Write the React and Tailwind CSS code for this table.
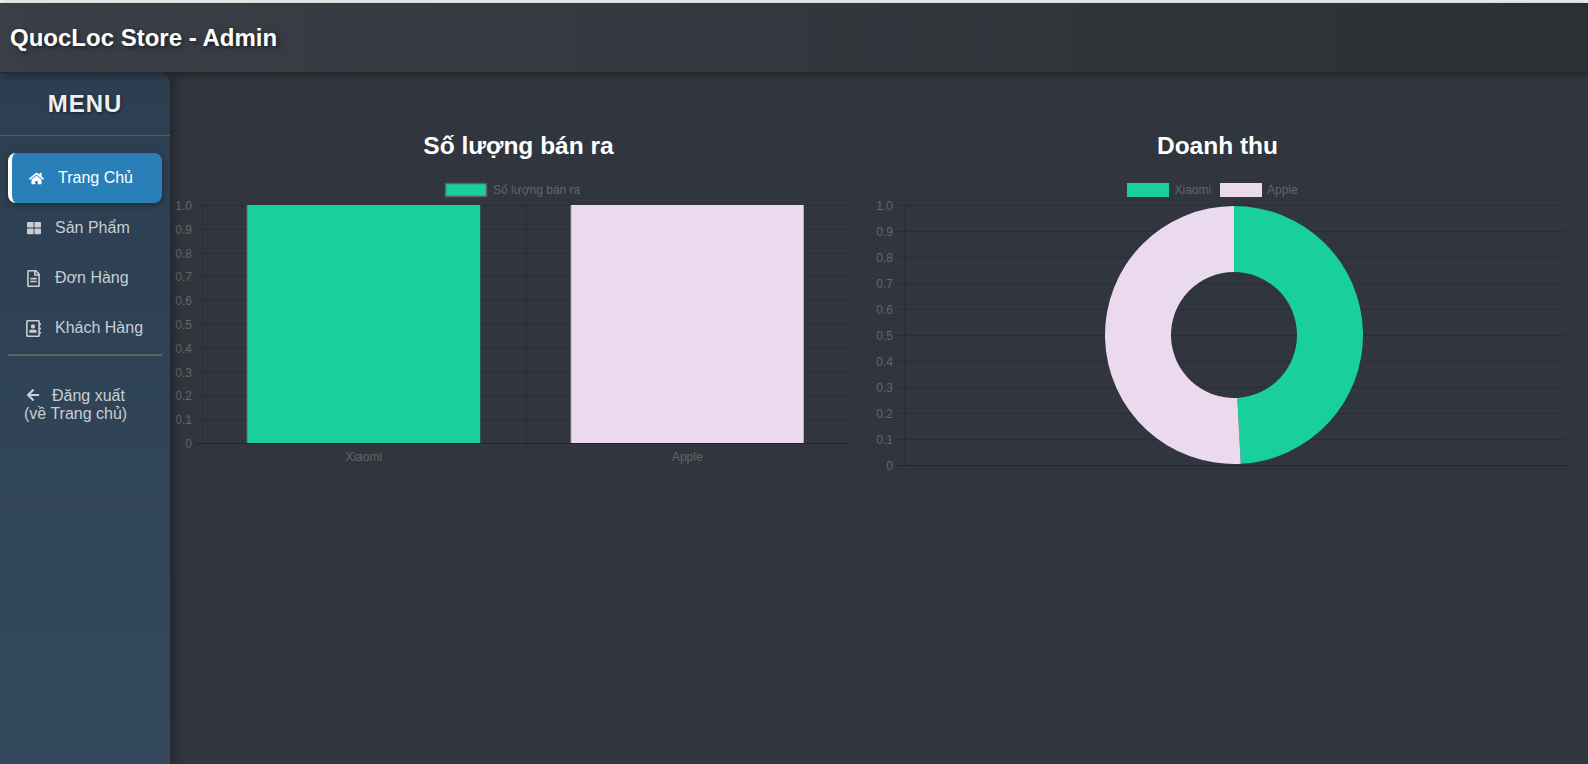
import React from 'react';
import { FaHome, FaThLarge, FaRegFileAlt, FaRegAddressBook, FaArrowLeft } from 'react-icons/fa';

const GREEN = '#19cf9c';
const PINK = '#ebd9ef';
const GRID = '#2a2d33';
const ZERO = '#222529';
const TICK = '#666666';
const FONT = "'Liberation Sans', Arial, sans-serif";

const menu = [
  { label: 'Trang Chủ', icon: FaHome, size: 15, active: true },
  { label: 'Sản Phẩm', icon: FaThLarge, size: 14 },
  { label: 'Đơn Hàng', icon: FaRegFileAlt, size: 17 },
  { label: 'Khách Hàng', icon: FaRegAddressBook, size: 17 },
];

const yTicks = ['1.0', '0.9', '0.8', '0.7', '0.6', '0.5', '0.4', '0.3', '0.2', '0.1', '0'];

const px = (v) => Math.round(v) + 0.5;

// angles in degrees, clockwise from 12 o'clock
const arcPath = (cx, cy, r0, r1, a0, a1) => {
  const pt = (r, a) => {
    const rad = (a * Math.PI) / 180;
    return [cx + r * Math.sin(rad), cy - r * Math.cos(rad)];
  };
  const large = a1 - a0 > 180 ? 1 : 0;
  const [x1, y1] = pt(r1, a0);
  const [x2, y2] = pt(r1, a1);
  const [x3, y3] = pt(r0, a1);
  const [x4, y4] = pt(r0, a0);
  return `M${x1} ${y1} A${r1} ${r1} 0 ${large} 1 ${x2} ${y2} L${x3} ${y3} A${r0} ${r0} 0 ${large} 0 ${x4} ${y4} Z`;
};

const BarChart = () => {
  const left = 32;
  const right = 679;
  const top = 35;
  const step = 23.8;
  const bottom = top + step * 10;
  const cat = (right - left) / 2;
  const barW = cat * 0.72;
  const bars = [
    { label: 'Xiaomi', color: GREEN },
    { label: 'Apple', color: PINK },
  ];

  return (
    <svg width="697" height="310" className="block" fontFamily={FONT}>
      {/* legend */}
      <rect x="275.5" y="13.5" width="41" height="13" fill={GREEN} stroke="#5c5f63" strokeWidth="1.5" />
      <text x="323" y="24" fontSize="12" fill={TICK}>Số lượng bán ra</text>

      {/* grid */}
      {yTicks.map((t, i) => {
        const y = px(top + i * step);
        return (
          <g key={t}>
            <line x1="25" x2={right} y1={y} y2={y} stroke={i === 10 ? ZERO : GRID} strokeWidth="1" />
            <text x="22" y={y + 4} fontSize="12" fill={TICK} textAnchor="end">{t}</text>
          </g>
        );
      })}
      <line x1={px(left)} x2={px(left)} y1={top} y2={bottom + 8} stroke={GRID} />
      <line x1={px(left + cat)} x2={px(left + cat)} y1={top} y2={bottom + 8} stroke={GRID} />

      {/* bars */}
      {bars.map((b, i) => {
        const cx = left + cat * i + cat / 2;
        return (
          <g key={b.label}>
            <rect x={cx - barW / 2} y={top} width={barW} height={bottom - top} fill={b.color} />
            <line x1={px(cx - barW / 2) - 0.5} x2={px(cx - barW / 2) - 0.5} y1={top} y2={bottom} stroke="#8a8d92" strokeOpacity="0.6" />
            <text x={cx} y={bottom + 18} fontSize="12" fill={TICK} textAnchor="middle">{b.label}</text>
          </g>
        );
      })}
      <line x1={left} x2={right} y1={px(bottom)} y2={px(bottom)} stroke={ZERO} />
    </svg>
  );
};

const DoughnutChart = () => {
  const left = 35;
  const right = 697;
  const top = 35;
  const step = 26;
  const bottom = top + step * 10;
  const cx = 365;
  const cy = 165;
  const split = 177;

  return (
    <svg width="697" height="310" className="block" fontFamily={FONT}>
      {/* legend */}
      <rect x="258" y="13" width="42" height="14" fill={GREEN} />
      <text x="305.5" y="24" fontSize="12" fill={TICK}>Xiaomi</text>
      <rect x="351" y="13" width="42" height="14" fill={PINK} />
      <text x="398" y="24" fontSize="12" fill={TICK}>Apple</text>

      {/* grid */}
      {yTicks.map((t, i) => {
        const y = px(top + i * step);
        return (
          <g key={t}>
            <line x1="27" x2={right} y1={y} y2={y} stroke={i === 10 ? ZERO : GRID} strokeWidth="1" />
            <text x="24" y={y + 4} fontSize="12" fill={TICK} textAnchor="end">{t}</text>
          </g>
        );
      })}
      <line x1={px(left)} x2={px(left)} y1={top} y2={bottom} stroke={GRID} />

      {/* doughnut */}
      <path d={arcPath(cx, cy, 63, 129, 0, split)} fill={GREEN} />
      <path d={arcPath(cx, cy, 63, 129, split, 360)} fill={PINK} />
    </svg>
  );
};

const ChartCard = ({ title, children, className = '' }) => (
  <div className={`w-[697px] pt-[57px] ${className}`}>
    <h2 className="h-8 text-center text-[24.5px] font-bold leading-8 text-white">{title}</h2>
    <div className="mt-2">{children}</div>
  </div>
);

export default function App() {
  return (
    <div className="flex min-h-screen flex-col bg-[#31353d] font-['Liberation_Sans',Arial,sans-serif]">
      <div className="h-[3px] bg-[#f3f3f3]" />
      <header className="relative z-20 flex h-[70px] items-center border-b border-[#25282c] bg-gradient-to-r from-[#3a3f47] to-[#2c3034] pl-[10px] shadow-[0_2px_8px_rgba(0,0,0,0.35)]">
        <h1 className="text-[24px] font-bold text-white [text-shadow:2px_2px_4px_rgba(0,0,0,0.5)]">
          QuocLoc Store - Admin
        </h1>
      </header>

      <div className="flex flex-1">
        <aside className="relative z-10 w-[170px] shrink-0 rounded-tr-[10px] bg-gradient-to-b from-[#2c3e50] to-[#34495e] shadow-[4px_0_10px_rgba(0,0,0,0.3)]">
          <div className="border-b border-white/15 pt-[17px] pb-[17px]">
            <h3 className="text-center text-[24px] font-bold leading-7 tracking-[1px] text-[#ecf0f1] [text-shadow:1px_1px_3px_rgba(0,0,0,0.5)]">
              MENU
            </h3>
          </div>

          <nav className="pt-[17px]">
            {menu.map(({ label, icon: Icon, size, active }) => (
              <div
                key={label}
                className={`mx-2 flex h-[50px] items-center gap-[14px] text-[16px] ${
                  active
                    ? 'rounded-lg border-l-4 border-white bg-[#2980b9] pl-[17px] text-white shadow-[0_2px_6px_rgba(0,0,0,0.35)]'
                    : 'pl-[18px] text-[#c8ced3]'
                }`}
              >
                <span className="flex w-[15px] justify-center">
                  <Icon size={size} />
                </span>
                <span>{label}</span>
              </div>
            ))}
          </nav>

          <div className="mx-2 mt-[1px] h-[2px] bg-[#5f6367]" />

          <div className="mx-2 mt-[31px] px-4 text-[16px] leading-[18px] text-[#c8ced3]">
            <FaArrowLeft size={14} className="mr-[12px] ml-[2px] inline-block align-[-1px]" />
            Đăng xuất
            <br />
            (về Trang chủ)
          </div>
        </aside>

        <main className="flex flex-1 items-start">
          <ChartCard title="Số lượng bán ra">
            <BarChart />
          </ChartCard>
          <ChartCard title="Doanh thu" className="ml-[2px]">
            <DoughnutChart />
          </ChartCard>
        </main>
      </div>
    </div>
  );
}
